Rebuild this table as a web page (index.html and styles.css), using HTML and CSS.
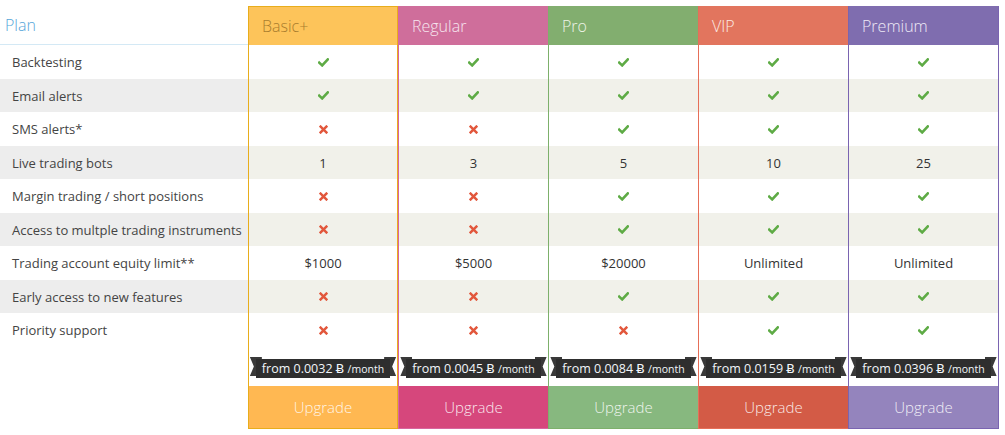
FILE: index.html
```html
<!DOCTYPE html>
<html>
<head>
<meta charset="utf-8">
<link rel="stylesheet" href="styles.css">
</head>
<body>
<svg width="0" height="0" style="position:absolute">
  <defs>
    <symbol id="ok" viewBox="0 0 11 9"><path d="M1.2 4.6 L4.2 7.4 L9.8 1.4" fill="none" stroke="#5eab45" stroke-width="2.6" stroke-linecap="square"/></symbol>
    <symbol id="no" viewBox="0 0 9 9"><path d="M1.6 1.6 L7.4 7.4 M7.4 1.6 L1.6 7.4" fill="none" stroke="#e2573c" stroke-width="2.5" stroke-linecap="square"/></symbol>
  </defs>
</svg>
<div class="pricing">
  <div class="labels">
    <div class="plan-head">Plan</div>
    <div class="lrow">Backtesting</div>
    <div class="lrow">Email alerts</div>
    <div class="lrow">SMS alerts*</div>
    <div class="lrow">Live trading bots</div>
    <div class="lrow">Margin trading / short positions</div>
    <div class="lrow">Access to multple trading instruments</div>
    <div class="lrow">Trading account equity limit**</div>
    <div class="lrow">Early access to new features</div>
    <div class="lrow">Priority support</div>
  </div>

  <div class="col basic">
    <div class="head">Basic+</div>
    <div class="cell"><svg class="ic ok"><use href="#ok"/></svg></div>
    <div class="cell"><svg class="ic ok"><use href="#ok"/></svg></div>
    <div class="cell"><svg class="ic no"><use href="#no"/></svg></div>
    <div class="cell">1</div>
    <div class="cell"><svg class="ic no"><use href="#no"/></svg></div>
    <div class="cell"><svg class="ic no"><use href="#no"/></svg></div>
    <div class="cell">$1000</div>
    <div class="cell"><svg class="ic no"><use href="#no"/></svg></div>
    <div class="cell"><svg class="ic no"><use href="#no"/></svg></div>
    <div class="price"><span class="ribbon">from 0.0032 Ƀ <small>/month</small></span></div>
    <div class="btn">Upgrade</div>
  </div>

  <div class="col regular">
    <div class="head">Regular</div>
    <div class="cell"><svg class="ic ok"><use href="#ok"/></svg></div>
    <div class="cell"><svg class="ic ok"><use href="#ok"/></svg></div>
    <div class="cell"><svg class="ic no"><use href="#no"/></svg></div>
    <div class="cell">3</div>
    <div class="cell"><svg class="ic no"><use href="#no"/></svg></div>
    <div class="cell"><svg class="ic no"><use href="#no"/></svg></div>
    <div class="cell">$5000</div>
    <div class="cell"><svg class="ic no"><use href="#no"/></svg></div>
    <div class="cell"><svg class="ic no"><use href="#no"/></svg></div>
    <div class="price"><span class="ribbon">from 0.0045 Ƀ <small>/month</small></span></div>
    <div class="btn">Upgrade</div>
  </div>

  <div class="col pro">
    <div class="head">Pro</div>
    <div class="cell"><svg class="ic ok"><use href="#ok"/></svg></div>
    <div class="cell"><svg class="ic ok"><use href="#ok"/></svg></div>
    <div class="cell"><svg class="ic ok"><use href="#ok"/></svg></div>
    <div class="cell">5</div>
    <div class="cell"><svg class="ic ok"><use href="#ok"/></svg></div>
    <div class="cell"><svg class="ic ok"><use href="#ok"/></svg></div>
    <div class="cell">$20000</div>
    <div class="cell"><svg class="ic ok"><use href="#ok"/></svg></div>
    <div class="cell"><svg class="ic no"><use href="#no"/></svg></div>
    <div class="price"><span class="ribbon">from 0.0084 Ƀ <small>/month</small></span></div>
    <div class="btn">Upgrade</div>
  </div>

  <div class="col vip">
    <div class="head">VIP</div>
    <div class="cell"><svg class="ic ok"><use href="#ok"/></svg></div>
    <div class="cell"><svg class="ic ok"><use href="#ok"/></svg></div>
    <div class="cell"><svg class="ic ok"><use href="#ok"/></svg></div>
    <div class="cell">10</div>
    <div class="cell"><svg class="ic ok"><use href="#ok"/></svg></div>
    <div class="cell"><svg class="ic ok"><use href="#ok"/></svg></div>
    <div class="cell">Unlimited</div>
    <div class="cell"><svg class="ic ok"><use href="#ok"/></svg></div>
    <div class="cell"><svg class="ic ok"><use href="#ok"/></svg></div>
    <div class="price"><span class="ribbon">from 0.0159 Ƀ <small>/month</small></span></div>
    <div class="btn">Upgrade</div>
  </div>

  <div class="col premium">
    <div class="head">Premium</div>
    <div class="cell"><svg class="ic ok"><use href="#ok"/></svg></div>
    <div class="cell"><svg class="ic ok"><use href="#ok"/></svg></div>
    <div class="cell"><svg class="ic ok"><use href="#ok"/></svg></div>
    <div class="cell">25</div>
    <div class="cell"><svg class="ic ok"><use href="#ok"/></svg></div>
    <div class="cell"><svg class="ic ok"><use href="#ok"/></svg></div>
    <div class="cell">Unlimited</div>
    <div class="cell"><svg class="ic ok"><use href="#ok"/></svg></div>
    <div class="cell"><svg class="ic ok"><use href="#ok"/></svg></div>
    <div class="price"><span class="ribbon">from 0.0396 Ƀ <small>/month</small></span></div>
    <div class="btn">Upgrade</div>
  </div>
</div>
</body>
</html>
```

FILE: styles.css
```css
* { box-sizing: border-box; }

body {
  margin: 0;
  background: #ffffff;
  font-family: "Open Sans", "DejaVu Sans", sans-serif;
  color: #444;
}

.pricing {
  display: flex;
  align-items: flex-start;
  padding-top: 6px;
}

.labels {
  width: 248px;
  flex: none;
}

.plan-head {
  height: 39px;
  padding-left: 5px;
  border-bottom: 1px solid #d4e9f5;
  font-size: 16px;
  font-weight: 300;
  line-height: 38px;
  color: #57a6d9;
}

.lrow {
  height: 33.5px;
  padding: 1px 0 0 12px;
  font-size: 13px;
  line-height: 32.5px;
  color: #444;
  white-space: nowrap;
}

.lrow:nth-child(odd) { background: #ededed; }

.col {
  width: 150px;
  flex: none;
  border-top: 1px solid var(--hd);
  border-left: 1px solid var(--bd);
  border-bottom: 1px solid var(--bd);
}

.basic {
  --hd: #fdc45a; --bd: #e8ad1c; --bt: #ffb852; --tx: #a97d2e;
  border: 1px solid var(--bd);
}
.regular { --hd: #cf6e9b; --bd: #d9659e; --bt: #d6477c; --tx: #f6e6ef; }
.pro     { --hd: #82ae6f; --bd: #7db06b; --bt: #87b87f; --tx: #eef5e8; }
.vip     { --hd: #e2755e; --bd: #e66f58; --bt: #d35b46; --tx: #fbeae4; }
.premium { --hd: #7f6daf; --bd: #7a64b1; --bt: #9484bd; --tx: #eeeaf6;
  width: 151px;
  border-right: 1px solid var(--bd);
}

.head {
  height: 38px;
  padding-left: 13px;
  background: var(--hd);
  color: var(--tx);
  font-size: 16px;
  font-weight: 300;
  line-height: 38px;
}

.cell {
  height: 33.5px;
  padding-top: 1px;
  display: flex;
  align-items: center;
  justify-content: center;
  font-size: 13px;
  color: #333;
}

.cell:nth-child(odd) { background: #f1f1ea; }

.ic { display: block; }
.ic.ok { width: 11px; height: 9px; }
.ic.no { width: 9px; height: 9px; }

.price {
  position: relative;
  z-index: 0;
  height: 39.5px;
  display: flex;
  align-items: flex-end;
  justify-content: center;
  padding-bottom: 8px;
}

.ribbon {
  position: relative;
  display: block;
  height: 19px;
  padding: 0 6px;
  background: #2e2e2e;
  color: #f2f6fa;
  font-size: 12.5px;
  line-height: 19px;
  white-space: nowrap;
}

.ribbon small { font-size: 10.5px; }

.ribbon::before,
.ribbon::after {
  content: "";
  position: absolute;
  top: -2px;
  width: 12px;
  height: 19px;
  background: #3a3a3a;
  z-index: -1;
}

.ribbon::before {
  left: -6px;
  clip-path: polygon(0 0, 100% 0, 100% 100%, 0 100%, 4px 50%);
}

.ribbon::after {
  right: -6px;
  clip-path: polygon(0 0, 100% 0, calc(100% - 4px) 50%, 100% 100%, 0 100%);
}

.btn {
  height: 42px;
  background: var(--bt);
  color: rgba(255, 255, 255, 0.88);
  font-size: 15px;
  font-weight: 300;
  line-height: 42px;
  text-align: center;
}
```
